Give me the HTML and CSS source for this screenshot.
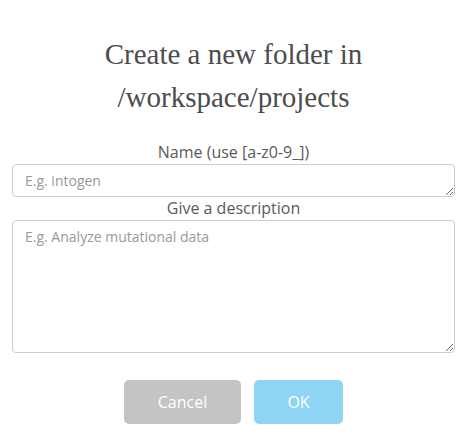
FILE: index.html
```html
<!DOCTYPE html>
<html>
<head>
<meta charset="utf-8">
<link rel="stylesheet" href="styles.css">
</head>
<body>
<div class="dialog">
  <h1 class="title">Create a new folder in<br>/workspace/projects</h1>
  <form class="form">
    <label class="label" for="name">Name (use [a-z0-9_])</label>
    <textarea id="name" class="field field-name" rows="1" placeholder="E.g. intogen"></textarea>
    <label class="label" for="desc">Give a description</label>
    <textarea id="desc" class="field field-desc" placeholder="E.g. Analyze mutational data"></textarea>
    <div class="actions">
      <button type="button" class="btn btn-cancel">Cancel</button>
      <button type="button" class="btn btn-ok">OK</button>
    </div>
  </form>
</div>
</body>
</html>
```
FILE: styles.css
```css
html, body {
  margin: 0;
  padding: 0;
  background: #ffffff;
}
.dialog {
  padding: 0 12px;
  font-family: "Open Sans", sans-serif;
  color: #555555;
}
.title {
  margin: 33px 0 0 0;
  font-family: "Liberation Serif", serif;
  font-weight: normal;
  font-size: 29px;
  line-height: 43px;
  text-align: center;
  color: #4d4d4d;
}
.form {
  display: flex;
  flex-direction: column;
  margin-top: 22px;
}
.label {
  display: block;
  text-align: center;
  font-size: 16px;
  line-height: 22px;
  color: #5a5a5a;
}
.field {
  display: block;
  box-sizing: border-box;
  width: 100%;
  margin: 1px 0 0 0;
  padding: 6px 12px;
  border: 1px solid #cccccc;
  border-radius: 4px;
  font-family: "Open Sans", sans-serif;
  font-size: 14px;
  line-height: 19px;
  color: #555555;
  background: #ffffff;
}
.field::placeholder {
  color: #999999;
}
.field-name {
  height: 33px;
}
.field-desc {
  height: 133px;
}
.actions {
  display: flex;
  justify-content: center;
  gap: 13px;
  margin-top: 27px;
}
.btn {
  height: 44px;
  border: none;
  border-radius: 5px;
  font-family: "Open Sans", sans-serif;
  font-size: 16px;
  color: #ffffff;
  cursor: pointer;
}
.btn-cancel {
  width: 117px;
  background: #c4c4c4;
}
.btn-ok {
  width: 89px;
  background: #8dd4f5;
}
```
